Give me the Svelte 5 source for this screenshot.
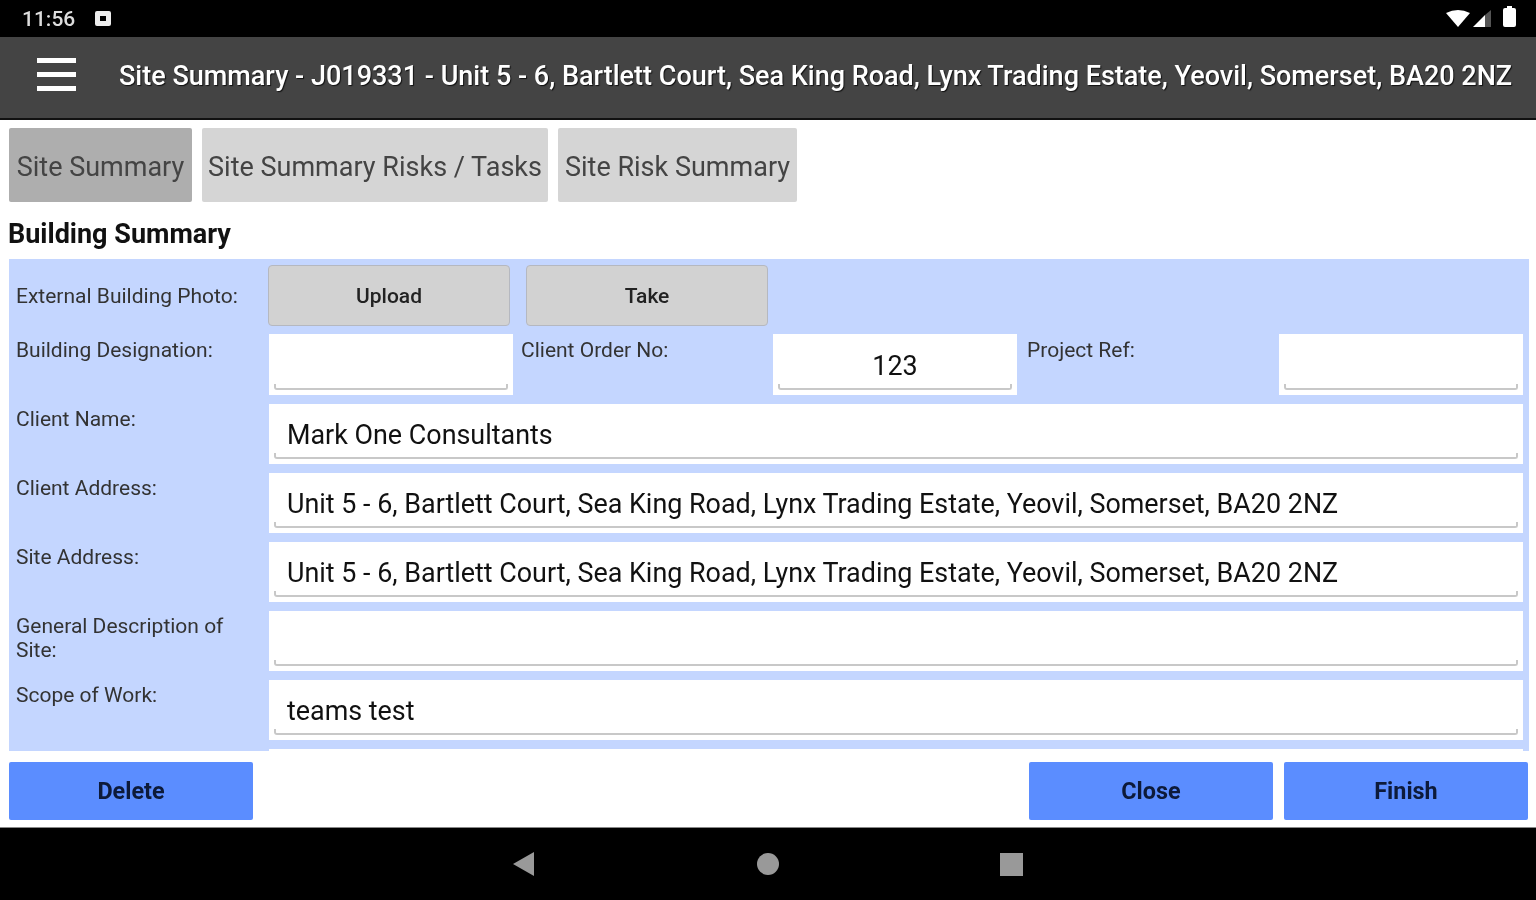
<script>
    const address = "Unit 5 - 6, Bartlett Court, Sea King Road, Lynx Trading Estate, Yeovil, Somerset, BA20 2NZ";

    const tabs = [
        { name: "Site Summary", active: true },
        { name: "Site Summary Risks / Tasks", active: false },
        { name: "Site Risk Summary", active: false }
    ];

    const rows = [
        { label: "Client Name:", value: "Mark One Consultants" },
        { label: "Client Address:", value: address },
        { label: "Site Address:", value: address },
        { label: "General Description of Site:", value: "" },
        { label: "Scope of Work:", value: "teams test" },
        { label: "", value: "" }
    ];
</script>

<div class="screen">
    <div class="status">
        <span class="time">11:56</span>
        <svg class="notif" width="16" height="15" viewBox="0 0 16 15">
            <path fill-rule="evenodd" d="M2 0h12a2 2 0 0 1 2 2v11a2 2 0 0 1-2 2H2a2 2 0 0 1-2-2V2a2 2 0 0 1 2-2zM5 5v5h6V5z" fill="#eee" />
        </svg>
        <span class="spacer"></span>
        <svg width="24" height="17" viewBox="0 0 24 17"><path d="M0 3 Q12 -3 24 3 L12 17z" fill="#fff" /></svg>
        <svg class="signal" width="18" height="17" viewBox="0 0 18 17">
            <path d="M0 17 L12 5 V17z" fill="#fff" />
            <path d="M12 5 L18 0 V17 H12z" fill="#555" />
        </svg>
        <svg class="battery" width="13" height="21" viewBox="0 0 13 21">
            <path d="M4 0h5v2h2a2 2 0 0 1 2 2v15a2 2 0 0 1-2 2H2a2 2 0 0 1-2-2V4a2 2 0 0 1 2-2h2z" fill="#fff" />
        </svg>
    </div>

    <header class="bar">
        <button class="menu" aria-label="Menu"><i></i><i></i><i></i></button>
        <h1>Site Summary - J019331 - {address}</h1>
    </header>

    <main>
        <div class="tabs">
            {#each tabs as tab}
                <div class="tab" class:active={tab.active}>{tab.name}</div>
            {/each}
        </div>

        <h2>Building Summary</h2>

        <div class="panel">
            <div class="line top">
                <div class="label middle">External Building Photo:</div>
                <div class="photo-btns">
                    <button class="grey">Upload</button>
                    <button class="grey">Take</button>
                </div>
            </div>

            <div class="line triple">
                <div class="label">Building Designation:</div>
                <div class="field"></div>
                <div class="label second">Client Order No:</div>
                <div class="field center">123</div>
                <div class="label third">Project Ref:</div>
                <div class="field"></div>
            </div>

            {#each rows as row}
                <div class="line">
                    <div class="label">{row.label}</div>
                    <div class="field">{row.value}</div>
                </div>
            {/each}
        </div>

        <div class="actions">
            <button class="blue">Delete</button>
            <span class="spacer"></span>
            <button class="blue">Close</button>
            <button class="blue">Finish</button>
        </div>
    </main>

    <nav>
        <svg width="22" height="24" viewBox="0 0 22 24"><path d="M0 12 L21 0 V24z" fill="#999" /></svg>
        <span class="home"></span>
        <span class="recent"></span>
    </nav>
</div>

<style>
    :global(body) {
        margin: 0;
        background: #000;
    }

    .screen {
        width: 1536px;
        height: 900px;
        display: flex;
        flex-direction: column;
        overflow: hidden;
        font-family: Roboto, "Liberation Sans", sans-serif;
        filter: blur(0.7px);
    }

    .status {
        height: 37px;
        flex: none;
        background: #000;
        display: flex;
        align-items: center;
        padding: 0 20px 0 22px;
        color: #ddd;
    }

    .time {
        font-size: 21px;
        font-weight: 500;
        width: 73px;
    }

    .spacer {
        flex: 1;
    }

    .signal {
        margin-left: 3px;
    }

    .battery {
        margin-left: 12px;
        margin-top: -4px;
    }

    .bar {
        height: 77px;
        padding-bottom: 4px;
        flex: none;
        background: #444;
        border-bottom: 2px solid #111;
        display: flex;
        align-items: center;
    }

    .menu {
        width: 39px;
        margin: -2px 0 0 37px;
        padding: 0;
        border: none;
        background: none;
        display: flex;
        flex-direction: column;
        gap: 9px;
    }

    .menu i {
        height: 5px;
        background: #fff;
    }

    h1 {
        margin: 0 0 0 43px;
        font-size: 27px;
        font-weight: 500;
        color: #fff;
        white-space: nowrap;
        text-shadow: 1px 1px 1px #111;
    }

    main {
        flex: 1;
        min-height: 0;
        background: #fff;
        padding: 8px 8px 0 9px;
        border-bottom: 1px solid #888;
    }

    .tabs {
        display: flex;
        gap: 10px;
    }

    .tab {
        height: 74px;
        line-height: 78px;
        text-align: center;
        background: #d5d5d5;
        color: #444;
        font-size: 27px;
        border-radius: 2px;
    }

    .tab:nth-child(1) {
        width: 183px;
    }

    .tab:nth-child(2) {
        width: 346px;
    }

    .tab:nth-child(3) {
        width: 239px;
    }

    .tab.active {
        background: #aeaeae;
    }

    h2 {
        margin: 0;
        height: 57px;
        line-height: 64px;
        margin-left: -1px;
        font-size: 27px;
        font-weight: 700;
        color: #111;
    }

    .panel {
        width: 1520px;
        height: 492px;
        box-sizing: border-box;
        padding-top: 6px;
        background: #c4d6ff;
        overflow: hidden;
    }

    .line {
        height: 60px;
        margin-bottom: 9px;
        display: grid;
        grid-template-columns: 260px 1254px;
        grid-template-rows: minmax(0, 1fr);
    }

    .line.top {
        height: 61px;
        margin-bottom: 8px;
    }

    .line.triple {
        height: 61px;
        grid-template-columns: 260px 244px 260px 244px 262px 244px;
    }

    .label {
        padding: 3px 0 0 7px;
        font-size: 21px;
        line-height: 24px;
        color: #333;
    }

    .triple .label {
        padding-top: 4px;
    }

    .label.middle {
        padding-top: 0;
        align-self: center;
    }

    .triple .label.second {
        padding-left: 8px;
    }

    .triple .label.third {
        padding-left: 10px;
    }

    .photo-btns {
        display: flex;
        gap: 16px;
        margin-left: -1px;
    }

    .grey {
        width: 242px;
        height: 61px;
        padding: 0;
        background: #d2d2d2;
        border: 1px solid #b5b8c0;
        border-radius: 4px;
        font-family: inherit;
        font-size: 21px;
        font-weight: 500;
        color: #222;
    }

    .field {
        position: relative;
        overflow: hidden;
        background: #fff;
        padding-left: 18px;
        font-size: 26.9px;
        line-height: 63px;
        color: #111;
    }

    .triple .field {
        line-height: 65px;
    }

    .field.center {
        padding-left: 0;
        text-align: center;
    }

    /* underline with the little upturned ends of an android edit text */
    .field::after {
        content: "";
        position: absolute;
        left: 5px;
        right: 5px;
        bottom: 5px;
        height: 4px;
        border: 2px solid #c8c8c8;
        border-top: none;
        border-radius: 0 0 3px 3px;
    }

    .actions {
        display: flex;
        gap: 11px;
        padding-top: 11px;
    }

    .blue {
        width: 244px;
        height: 58px;
        padding: 0;
        background: #5b8dff;
        border: none;
        border-radius: 2px;
        font-family: inherit;
        font-size: 23.4px;
        font-weight: 700;
        color: #0d1a3a;
    }

    nav {
        height: 72px;
        flex: none;
        background: #000;
        display: flex;
        align-items: center;
        padding-left: 513px;
    }

    .home {
        width: 22px;
        height: 22px;
        margin-left: 222px;
        border-radius: 50%;
        background: #999;
    }

    .recent {
        width: 23px;
        height: 23px;
        margin-left: 221px;
        background: #999;
    }
</style>
